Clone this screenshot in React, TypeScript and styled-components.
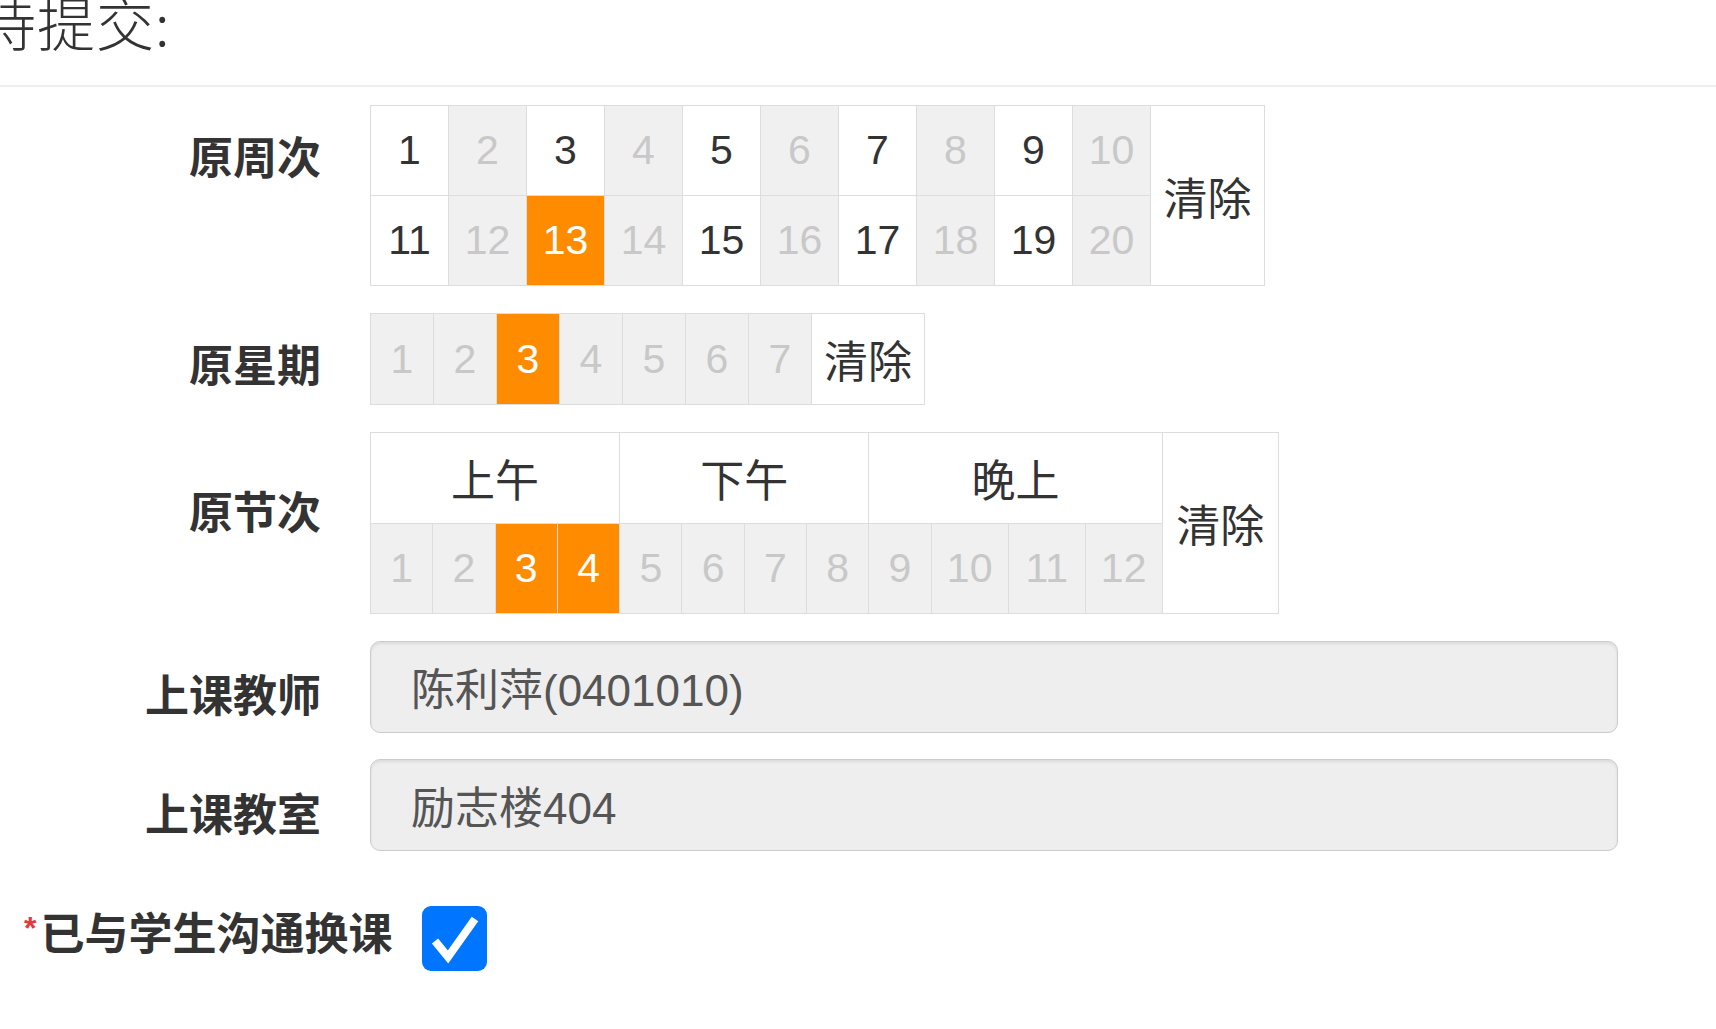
import React from "react";
import styled, { createGlobalStyle } from "styled-components";

const GlobalStyle = createGlobalStyle`
  html, body { margin: 0; padding: 0; background: #fff; }
  body {
    font-family: "Liberation Sans", "Noto Sans CJK SC", sans-serif;
    color: #333;
    overflow: hidden;
  }
  * { box-sizing: border-box; }
`;

const Page = styled.div`
  width: 1716px;
  height: 1029px;
  overflow: hidden;
  background: #fff;
`;

const Header = styled.div`
  height: 87px;
  border-bottom: 2px solid #eee;
  overflow: hidden;
`;

const Title = styled.h3`
  margin: -8px 0 0 -22px;
  font-family: "Noto Sans CJK SC", sans-serif;
  font-size: 58px;
  line-height: 1;
  font-weight: 300;
  color: #333;
  letter-spacing: 1px;
`;

const Form = styled.div`
  width: 1618px;
  padding-top: 18px;
`;

const FormGroup = styled.div<{ $mb: number }>`
  display: grid;
  grid-template-columns: 321px 1fr;
  column-gap: 49px;
  margin-bottom: ${(p) => p.$mb}px;
`;

const Label = styled.label<{ $top: number }>`
  text-align: right;
  font-family: "Noto Sans CJK SC", sans-serif;
  font-weight: 700;
  font-size: 44px;
  line-height: 50px;
  color: #333;
  padding-top: ${(p) => p.$top}px;
  white-space: nowrap;
`;

const Grid = styled.div<{ $cols: string; $rows: string }>`
  display: grid;
  grid-template-columns: ${(p) => p.$cols};
  grid-template-rows: ${(p) => p.$rows};
  border-top: 1px solid #ddd;
  border-left: 1px solid #ddd;
  width: max-content;
`;

type CellState = "on" | "off" | "sel";

const bg: Record<CellState, string> = { on: "#fff", off: "#f0f0f0", sel: "#ff8c00" };
const fg: Record<CellState, string> = { on: "#333", off: "#c8c8c8", sel: "#fff" };

const NumCell = styled.div<{ $state: CellState }>`
  display: flex;
  align-items: center;
  justify-content: center;
  border-right: 1px solid #ddd;
  border-bottom: 1px solid #ddd;
  background: ${(p) => bg[p.$state]};
  color: ${(p) => fg[p.$state]};
  font-family: "Liberation Sans", sans-serif;
  font-size: 41px;
  cursor: pointer;
`;

const TextCell = styled.div<{ $col?: string; $row?: string }>`
  display: flex;
  align-items: center;
  justify-content: center;
  border-right: 1px solid #ddd;
  border-bottom: 1px solid #ddd;
  background: #fff;
  color: #333;
  font-family: "Noto Sans CJK SC", sans-serif;
  font-size: 44px;
  grid-column: ${(p) => p.$col || "auto"};
  grid-row: ${(p) => p.$row || "auto"};
  cursor: pointer;
`;

const Input = styled.input`
  display: block;
  width: 100%;
  height: 92px;
  border: 1px solid #ccc;
  border-radius: 10px;
  background: #eee;
  box-shadow: inset 0 2px 3px rgba(0, 0, 0, 0.08);
  padding: 0 0 0 40px;
  font-family: "Liberation Sans", "Noto Sans CJK SC", sans-serif;
  font-size: 44px;
  color: #555;
  outline: none;
`;

const CheckRow = styled.div`
  display: flex;
  align-items: flex-start;
  gap: 30px;
  padding-left: 24px;
`;

const CheckLabel = styled.label`
  font-family: "Noto Sans CJK SC", sans-serif;
  font-weight: 700;
  font-size: 44px;
  line-height: 50px;
  color: #333;
  white-space: nowrap;
`;

const Required = styled.span`
  display: inline-block;
  vertical-align: top;
  margin-top: 6px;
  margin-right: 4px;
  font-family: "Liberation Sans", sans-serif;
  font-size: 32px;
  line-height: 1;
  font-weight: 700;
  color: #e4393c;
`;

const CheckBox = styled.span`
  display: flex;
  width: 65px;
  height: 65px;
  border-radius: 9px;
  background: #0075ff;
  align-items: center;
  justify-content: center;
`;

const week = (n: number): CellState => (n === 13 ? "sel" : n % 2 === 1 ? "on" : "off");

export default function App() {
  const weeks1 = Array.from({ length: 10 }, (_, i) => i + 1);
  const weeks2 = Array.from({ length: 10 }, (_, i) => i + 11);
  const days = Array.from({ length: 7 }, (_, i) => i + 1);
  const sections = Array.from({ length: 12 }, (_, i) => i + 1);

  return (
    <Page>
      <GlobalStyle />
      <Header>
        <Title>待提交:</Title>
      </Header>
      <Form>
        <FormGroup $mb={27}>
          <Label $top={25}>原周次</Label>
          <Grid $cols="repeat(10, 78px) 114px" $rows="90px 90px">
            {weeks1.map((n) => (
              <NumCell key={n} $state={week(n)}>{n}</NumCell>
            ))}
            <TextCell $col="11" $row="1 / span 2">清除</TextCell>
            {weeks2.map((n) => (
              <NumCell key={n} $state={week(n)}>{n}</NumCell>
            ))}
          </Grid>
        </FormGroup>

        <FormGroup $mb={27}>
          <Label $top={25}>原星期</Label>
          <Grid $cols="repeat(7, 63px) 113px" $rows="91px">
            {days.map((n) => (
              <NumCell key={n} $state={n === 3 ? "sel" : "off"}>{n}</NumCell>
            ))}
            <TextCell>清除</TextCell>
          </Grid>
        </FormGroup>

        <FormGroup $mb={27}>
          <Label $top={53}>原节次</Label>
          <Grid $cols="repeat(9, 62.3px) repeat(3, 77px) 116px" $rows="91px 90px">
            <TextCell $col="1 / span 4" $row="1">上午</TextCell>
            <TextCell $col="5 / span 4" $row="1">下午</TextCell>
            <TextCell $col="9 / span 4" $row="1">晚上</TextCell>
            <TextCell $col="13" $row="1 / span 2">清除</TextCell>
            {sections.map((n) => (
              <NumCell key={n} $state={n === 3 || n === 4 ? "sel" : "off"}>{n}</NumCell>
            ))}
          </Grid>
        </FormGroup>

        <FormGroup $mb={26}>
          <Label $top={27}>上课教师</Label>
          <Input readOnly value="陈利萍(0401010)" />
        </FormGroup>

        <FormGroup $mb={55}>
          <Label $top={28}>上课教室</Label>
          <Input readOnly value="励志楼404" />
        </FormGroup>

        <CheckRow>
          <CheckLabel>
            <Required>*</Required>已与学生沟通换课
          </CheckLabel>
          <CheckBox role="checkbox" aria-checked="true">
            <svg width="65" height="65" viewBox="0 0 65 65">
              <polyline
                points="13,35 26,51 53,13"
                fill="none"
                stroke="#fff"
                strokeWidth="8"
                strokeLinejoin="miter"
              />
            </svg>
          </CheckBox>
        </CheckRow>
      </Form>
    </Page>
  );
}
